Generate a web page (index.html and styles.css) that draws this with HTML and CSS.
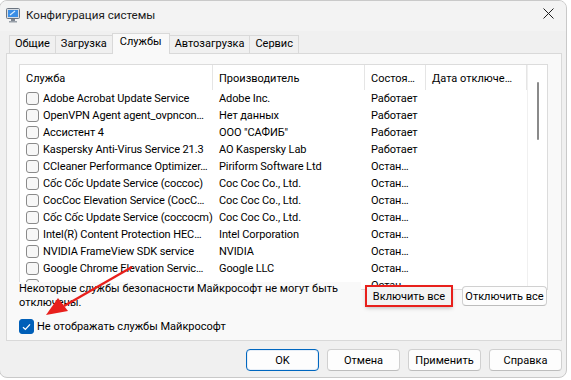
FILE: index.html
```html
<!DOCTYPE html>
<html lang="ru">
<head>
    <meta charset="UTF-8">
    <title>Конфигурация системы</title>
    <link rel="stylesheet" href="styles.css">
</head>
<body>
    <div class="window">
        <div class="titlebar">
            <svg class="app-icon" width="14" height="15" viewBox="0 0 14 15">
                <rect x="0.5" y="0.5" width="13" height="10" rx="1" fill="#d8dde3" stroke="#6b7480"/>
                <rect x="2" y="2" width="10" height="7" fill="#3a8ee6"/>
                <path d="M4 7 L9 3" stroke="#d6ecff" stroke-width="1.2"/>
                <rect x="5" y="11" width="4" height="2" fill="#7d8590"/>
                <rect x="3" y="13" width="8" height="1.5" fill="#9aa1aa"/>
            </svg>
            <span class="title">Конфигурация системы</span>
            <svg class="close" width="11" height="11" viewBox="0 0 11 11">
                <path d="M0.5 0.5 L10.5 10.5 M10.5 0.5 L0.5 10.5" stroke="#1b1b1b" stroke-width="1"/>
            </svg>
        </div>

        <div class="tabs">
            <div class="tab">Общие</div>
            <div class="tab">Загрузка</div>
            <div class="tab active">Службы</div>
            <div class="tab">Автозагрузка</div>
            <div class="tab">Сервис</div>
        </div>

        <div class="panel">
            <div class="list">
                <div class="list-main">
                    <div class="list-head">
                        <div class="col">Служба</div>
                        <div class="col">Производитель</div>
                        <div class="col">Состоя…</div>
                        <div class="col">Дата отключе…</div>
                    </div>
                    <div class="row"><div class="cell"><span class="box"></span>Adobe Acrobat Update Service</div><div class="cell">Adobe Inc.</div><div class="cell">Работает</div><div class="cell"></div></div>
                    <div class="row"><div class="cell"><span class="box"></span>OpenVPN Agent agent_ovpncon…</div><div class="cell">Нет данных</div><div class="cell">Работает</div><div class="cell"></div></div>
                    <div class="row"><div class="cell"><span class="box"></span>Ассистент 4</div><div class="cell">ООО "САФИБ"</div><div class="cell">Работает</div><div class="cell"></div></div>
                    <div class="row"><div class="cell"><span class="box"></span>Kaspersky Anti-Virus Service 21.3</div><div class="cell">AO Kaspersky Lab</div><div class="cell">Работает</div><div class="cell"></div></div>
                    <div class="row"><div class="cell"><span class="box"></span>CCleaner Performance Optimizer…</div><div class="cell">Piriform Software Ltd</div><div class="cell">Остан…</div><div class="cell"></div></div>
                    <div class="row"><div class="cell"><span class="box"></span>Cốc Cốc Update Service (coccoc)</div><div class="cell">Coc Coc Co., Ltd.</div><div class="cell">Остан…</div><div class="cell"></div></div>
                    <div class="row"><div class="cell"><span class="box"></span>CocCoc Elevation Service (CocC…</div><div class="cell">Coc Coc Co., Ltd.</div><div class="cell">Остан…</div><div class="cell"></div></div>
                    <div class="row"><div class="cell"><span class="box"></span>Cốc Cốc Update Service (coccocm)</div><div class="cell">Coc Coc Co., Ltd.</div><div class="cell">Остан…</div><div class="cell"></div></div>
                    <div class="row"><div class="cell"><span class="box"></span>Intel(R) Content Protection HEC…</div><div class="cell">Intel Corporation</div><div class="cell">Остан…</div><div class="cell"></div></div>
                    <div class="row"><div class="cell"><span class="box"></span>NVIDIA FrameView SDK service</div><div class="cell">NVIDIA</div><div class="cell">Остан…</div><div class="cell"></div></div>
                    <div class="row"><div class="cell"><span class="box"></span>Google Chrome Elevation Servic…</div><div class="cell">Google LLC</div><div class="cell">Остан…</div><div class="cell"></div></div>
                    <div class="row"><div class="cell"><span class="box"></span></div><div class="cell"></div><div class="cell">Остан…</div><div class="cell"></div></div>
                </div>
                <div class="scrollbar"><div class="thumb"></div></div>
            </div>

            <div class="note-row">
                <p class="note">Некоторые службы безопасности Майкрософт не могут быть отключены.</p>
                <button class="btn btn-marked">Включить все</button>
                <button class="btn btn-off">Отключить все</button>
            </div>

            <div class="hide-ms">
                <span class="box checked">
                    <svg width="9" height="8" viewBox="0 0 9 8"><path d="M1 4.2 L3.4 6.4 L8 1.4" fill="none" stroke="#fff" stroke-width="1.3"/></svg>
                </span>
                Не отображать службы Майкрософт
            </div>
        </div>

        <div class="footer">
            <button class="btn btn-dlg btn-default">OK</button>
            <button class="btn btn-dlg">Отмена</button>
            <button class="btn btn-dlg">Применить</button>
            <button class="btn btn-dlg">Справка</button>
        </div>

        <!-- красная стрелка-пометка поверх окна -->
        <svg class="arrow" width="110" height="60" viewBox="0 0 110 60">
            <path d="M98 4 L30 43" stroke="#e8201c" stroke-width="2.4" fill="none"/>
            <path d="M12 52 L24 35 L34 48 Z" fill="#e8201c"/>
        </svg>
    </div>
</body>
</html>
```

FILE: styles.css
```css
body {
    margin: 0;
    padding: 0;
    background: #ffffff;
    font-family: Roboto, "Noto Sans", sans-serif;
    font-size: 11px;
    color: #000;
}
.window {
    position: relative;
    width: 568px;
    height: 378px;
    margin-left: -1px;
    background: #f0f0f0;
    border: 1px solid #c9c9c9;
    border-radius: 8px;
    box-sizing: border-box;
    overflow: hidden;
}
.titlebar {
    display: flex;
    align-items: center;
    height: 30px;
    padding-left: 6px;
    background: #f3f3f3;
}
.app-icon {
    margin-right: 6px;
    margin-top: -2px;
}
.title {
    flex: 1;
    font-size: 11.6px;
    color: #1a1a1a;
    margin-top: -2px;
}
.close {
    margin-right: 12px;
    margin-top: -6px;
}
.tabs {
    display: flex;
    align-items: flex-end;
    height: 22px;
    padding-left: 9px;
}
.tab {
    height: 17px;
    line-height: 16px;
    padding: 0 5px;
    border: 1px solid #d9d9d9;
    border-bottom: none;
    margin-right: -1px;
    background: #f0f0f0;
}
.tab.active {
    position: relative;
    height: 20px;
    line-height: 16px;
    padding: 0 7px;
    background: #f9f9f9;
    margin-bottom: -1px;
    z-index: 1;
}
.panel {
    margin: 0 4px 0 6px;
    height: 288px;
    border: 1px solid #d9d9d9;
    background: #f9f9f9;
    padding: 10px 12px 0 12px;
    box-sizing: border-box;
}
.list {
    display: flex;
    width: 529px;
    height: 226px;
    border: 1px solid #dcdcdc;
    background: #fff;
    box-sizing: border-box;
    overflow: hidden;
}
.list-main {
    width: 507px;
}
.list-head,
.row {
    display: grid;
    grid-template-columns: 193px 152px 61px 101px;
}
.list-head {
    height: 25px;
}
.list-head .col {
    padding: 7px 0 0 6px;
    border-right: 1px solid #e5e5e5;
    white-space: nowrap;
    overflow: hidden;
}
.row {
    height: 17px;
}
.cell {
    display: flex;
    align-items: center;
    padding-left: 6px;
    letter-spacing: -0.1px;
    white-space: nowrap;
    overflow: hidden;
}
.box {
    display: inline-flex;
    align-items: center;
    justify-content: center;
    width: 11px;
    height: 11px;
    border: 1px solid #8a8a8a;
    border-radius: 3px;
    background: #f7f7f7;
    margin-right: 4px;
    flex: none;
}
.box.checked {
    border-color: #005fb8;
    background: #005fb8;
}
.scrollbar {
    width: 20px;
    background: #fff;
    border-left: 1px solid #f0f0f0;
}
.thumb {
    width: 2px;
    height: 58px;
    margin: 17px 0 0 9px;
    background: #8a8a8a;
    border-radius: 1px;
}
.note-row {
    position: relative;
    display: flex;
    align-items: flex-start;
    margin-top: -8px;
}
.note {
    width: 342px;
    margin: 0;
    padding: 0;
    line-height: 14px;
    background: #f9f9f9;
}
.btn {
    font-family: Roboto, "Noto Sans", sans-serif;
    font-size: 11px;
    color: #000;
    background: #fdfdfd;
    border: 1px solid #d0d0d0;
    border-bottom-color: #bdbdbd;
    border-radius: 4px;
    padding: 0;
    white-space: nowrap;
    cursor: pointer;
}
.note-row .btn {
    height: 20px;
    margin-top: 4px;
}
.btn-marked {
    margin-left: 5px;
    width: 86px;
    background: #f3f3f3;
    border-radius: 0;
    outline: 2px solid #e8201c;
    outline-offset: -1px;
    box-shadow: 0 2px 4px rgba(0, 0, 0, 0.25);
}
.btn-off {
    margin-left: 10px;
    width: 85px;
}
.hide-ms {
    display: flex;
    align-items: center;
    margin-top: 9px;
}
.hide-ms .box {
    width: 13px;
    height: 13px;
    margin-right: 3px;
}
.footer {
    display: flex;
    justify-content: flex-end;
    gap: 8px;
    padding: 8px 4px 0 0;
}
.btn-dlg {
    width: 73px;
    height: 22px;
}
.btn-default {
    border: 1px solid #0067c0;
    box-shadow: inset 0 0 0 1px #e6eef7;
}
.arrow {
    position: absolute;
    left: 34px;
    top: 262px;
}
```
